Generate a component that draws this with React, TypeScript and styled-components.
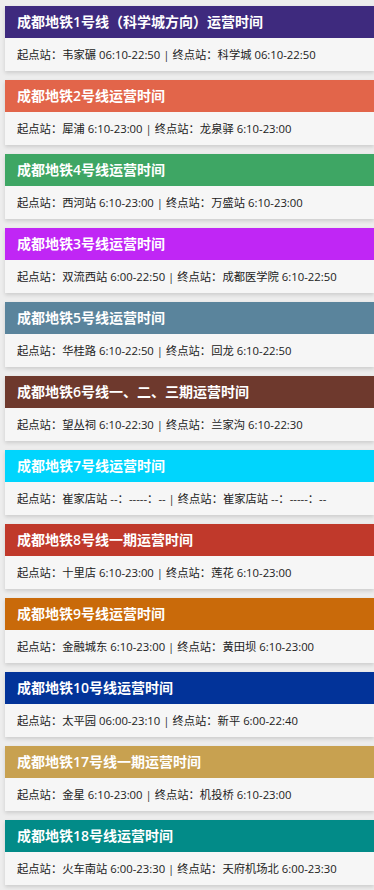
import styled, { createGlobalStyle } from 'styled-components';

type Line = {
  title: string;
  color: string;
  from: string;
  fromTime: string;
  to: string;
  toTime: string;
};

const lines: Line[] = [
  { title: '成都地铁1号线（科学城方向）运营时间', color: '#3e2a7e', from: '韦家碾', fromTime: '06:10-22:50', to: '科学城', toTime: '06:10-22:50' },
  { title: '成都地铁2号线运营时间', color: '#e2654a', from: '犀浦', fromTime: '6:10-23:00', to: '龙泉驿', toTime: '6:10-23:00' },
  { title: '成都地铁4号线运营时间', color: '#3ea664', from: '西河站', fromTime: '6:10-23:00', to: '万盛站', toTime: '6:10-23:00' },
  { title: '成都地铁3号线运营时间', color: '#c026f5', from: '双流西站', fromTime: '6:00-22:50', to: '成都医学院', toTime: '6:10-22:50' },
  { title: '成都地铁5号线运营时间', color: '#5a849c', from: '华桂路', fromTime: '6:10-22:50', to: '回龙', toTime: '6:10-22:50' },
  { title: '成都地铁6号线一、二、三期运营时间', color: '#6e392d', from: '望丛祠', fromTime: '6:10-22:30', to: '兰家沟', toTime: '6:10-22:30' },
  { title: '成都地铁7号线运营时间', color: '#00d5fd', from: '崔家店站', fromTime: '--：-----：--', to: '崔家店站', toTime: '--：-----：--' },
  { title: '成都地铁8号线一期运营时间', color: '#c0392b', from: '十里店', fromTime: '6:10-23:00', to: '莲花', toTime: '6:10-23:00' },
  { title: '成都地铁9号线运营时间', color: '#c96a0a', from: '金融城东', fromTime: '6:10-23:00', to: '黄田坝', toTime: '6:10-23:00' },
  { title: '成都地铁10号线运营时间', color: '#023399', from: '太平园', fromTime: '06:00-23:10', to: '新平', toTime: '6:00-22:40' },
  { title: '成都地铁17号线一期运营时间', color: '#c8a150', from: '金星', fromTime: '6:10-23:00', to: '机投桥', toTime: '6:10-23:00' },
  { title: '成都地铁18号线运营时间', color: '#028b88', from: '火车南站', fromTime: '6:00-23:30', to: '天府机场北', toTime: '6:00-23:30' },
];

const GlobalStyle = createGlobalStyle`
  html, body {
    margin: 0;
    padding: 0;
    background: #ededed;
  }
  body {
    font-family: "Open Sans", "Noto Sans CJK SC", sans-serif;
  }
`;

const Page = styled.div`
  display: flex;
  flex-direction: column;
  gap: 9px;
  padding: 6px 0 6px 5px;
`;

const Card = styled.section`
  background: #f6f6f6;
  box-shadow: 0 2px 4px rgba(0, 0, 0, 0.14);
`;

const Header = styled.div<{ $color: string }>`
  height: 32px;
  line-height: 32px;
  padding: 0 12px;
  background: ${(p) => p.$color};
  color: #fff;
  font-size: 14px;
  font-weight: 600;
  white-space: nowrap;
`;

const Body = styled.div`
  height: 33px;
  line-height: 33px;
  padding: 0 12px;
  color: #222;
  font-size: 11.3px;
  white-space: nowrap;
`;

const Sep = styled.span`
  color: #333;
`;

export default function App() {
  return (
    <>
      <GlobalStyle />
      <Page>
        {lines.map((l) => (
          <Card key={l.title}>
            <Header $color={l.color}>{l.title}</Header>
            <Body>
              起点站：{l.from} {l.fromTime} <Sep>|</Sep> 终点站：{l.to} {l.toTime}
            </Body>
          </Card>
        ))}
      </Page>
    </>
  );
}
